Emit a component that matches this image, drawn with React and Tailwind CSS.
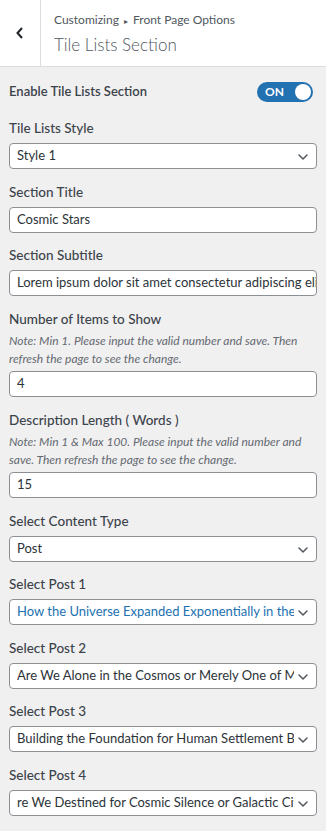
import { useState } from 'react';

const FONT = { fontFamily: 'Lato, "Noto Sans", sans-serif' };

function Chevron() {
  return (
    <svg width="10" height="6" viewBox="0 0 10 6" className="shrink-0">
      <polyline points="1,1 5,5 9,1" fill="none" stroke="#50575e" strokeWidth="1.5" strokeLinecap="round" strokeLinejoin="round" />
    </svg>
  );
}

function Label({ children }) {
  return <div className="text-[13.5px] leading-[20px] font-medium text-[#3c434a] mb-[5px]">{children}</div>;
}

function Note({ children }) {
  return <p className="text-[12px] leading-[18px] italic text-[#646970] mt-[-2px] mb-[3.5px]">{children}</p>;
}

function Input({ value }) {
  return (
    <div className="h-[26px] bg-white border border-[#8c8f94] rounded-[4px] px-[7px] flex items-center text-[13px] text-[#2c3338] overflow-hidden whitespace-nowrap">
      {value}
    </div>
  );
}

function Select({ value, active }) {
  return (
    <div className="relative h-[26px] bg-white border border-[#8c8f94] rounded-[4px] pl-[7px] pr-[22px] flex items-center overflow-hidden">
      <span className={`text-[13px] whitespace-nowrap overflow-hidden ${active ? 'text-[#2271b1]' : 'text-[#2c3338]'}`}>{value}</span>
      <span className="absolute right-[8px] top-[10px]"><Chevron /></span>
    </div>
  );
}

export default function App() {
  const [enabled, setEnabled] = useState(true);

  const posts = [
    'How the Universe Expanded Exponentially in the Early Moments',
    'Are We Alone in the Cosmos or Merely One of Many',
    'Building the Foundation for Human Settlement Beyond Earth',
    're We Destined for Cosmic Silence or Galactic Civilization',
  ];

  return (
    <div className="w-[326px] min-h-[831px] bg-[#f0f0f1]" style={FONT}>
      <div className="h-[67px] bg-white border-b border-[#dcdcde] flex">
        <button className="w-[41px] border-r border-[#dcdcde] flex items-center justify-center">
          <svg width="10" height="14" viewBox="0 0 10 14">
            <polyline points="7,2 2.5,7 7,12" fill="none" stroke="#1d2327" strokeWidth="2" />
          </svg>
        </button>
        <div className="pl-[13px] pt-[11px]">
          <div className="text-[12px] leading-[18px] text-[#50575e]">
            Customizing <span className="text-[8px] align-middle mx-[2px]">▸</span> Front Page Options
          </div>
          <div className="text-[17px] leading-[26px] font-light text-[#50575e] mt-[2px]">Tile Lists Section</div>
        </div>
      </div>

      <div className="px-[9px] pb-[15px]">
        <div className="mt-[15px] h-[20px] flex items-center justify-between">
          <span className="text-[13px] font-semibold text-[#3c434a]">Enable Tile Lists Section</span>
          <button
            onClick={() => setEnabled(!enabled)}
            className="mr-[4px] w-[56px] h-[20px] rounded-full bg-[#2271b1] flex items-center justify-between pl-[8px] pr-[2px]"
          >
            <span className="text-[12px] font-bold text-white leading-none">{enabled ? 'ON' : 'OFF'}</span>
            <span className="w-[16px] h-[16px] rounded-full bg-white"></span>
          </button>
        </div>

        <div className="mt-[16px]">
          <Label>Tile Lists Style</Label>
          <Select value="Style 1" />
        </div>

        <div className="mt-[12.5px]">
          <Label>Section Title</Label>
          <Input value="Cosmic Stars" />
        </div>

        <div className="mt-[12.5px]">
          <Label>Section Subtitle</Label>
          <Input value="Lorem ipsum dolor sit amet consectetur adipiscing elit sed do" />
        </div>

        <div className="mt-[12.5px]">
          <Label>Number of Items to Show</Label>
          <Note>Note: Min 1. Please input the valid number and save. Then refresh the page to see the change.</Note>
          <Input value="4" />
        </div>

        <div className="mt-[12.5px]">
          <Label>Description Length ( Words )</Label>
          <Note>Note: Min 1 &amp; Max 100. Please input the valid number and save. Then refresh the page to see the change.</Note>
          <Input value="15" />
        </div>

        <div className="mt-[12.5px]">
          <Label>Select Content Type</Label>
          <Select value="Post" />
        </div>

        {posts.map((p, i) => (
          <div key={i} className="mt-[12.5px]">
            <Label>Select Post {i + 1}</Label>
            <Select value={p} active={i === 0} />
          </div>
        ))}
      </div>
    </div>
  );
}
